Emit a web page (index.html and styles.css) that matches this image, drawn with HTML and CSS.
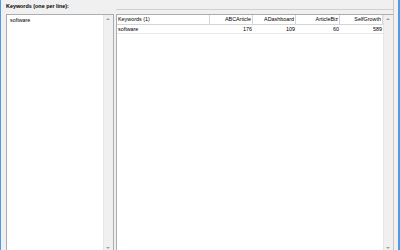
FILE: index.html
```html
<!DOCTYPE html>
<html lang="en">
<head>
  <meta charset="UTF-8">
  <title>Keywords</title>
  <link rel="stylesheet" href="styles.css">
</head>
<body>
<div class="window">
  <div class="edge"></div>
  <div class="main">
    <div class="left-col">
      <div class="label">Keywords (one per line):</div>
      <div class="input-box">
        <div class="input-text">software</div>
        <div class="vscroll">
          <span class="arrow up"></span>
          <span class="arrow down"></span>
        </div>
      </div>
    </div>
    <div class="right-col">
      <div class="top-strip"></div>
      <div class="grid-box">
        <div class="grid">
          <div class="row head">
            <div class="cell first">Keywords (1)</div>
            <div class="cell">ABCArticle</div>
            <div class="cell">ADashboard</div>
            <div class="cell wide">ArticleBiz</div>
            <div class="cell">SelfGrowth</div>
          </div>
          <div class="row">
            <div class="cell first">software</div>
            <div class="cell">176</div>
            <div class="cell">109</div>
            <div class="cell wide">60</div>
            <div class="cell">589</div>
          </div>
        </div>
        <div class="vscroll">
          <span class="arrow up"></span>
          <span class="arrow down"></span>
        </div>
      </div>
    </div>
  </div>
  <div class="edge right"></div>
</div>
</body>
</html>
```

FILE: styles.css
```css
body {
  margin: 0;
  font-family: 'Liberation Sans', Arial, sans-serif;
  font-size: 5.4px;
  color: #000;
  background: #f0f0f0;
}
.window {
  display: flex;
  height: 250px;
  overflow: hidden;
}
.edge {
  width: 2px;
  background: #4d9be6;
}
.edge.right {
  width: 4px;
  margin-left: 4px;
}
.main {
  flex: 1;
  display: flex;
  padding-left: 5px;
  gap: 2px;
}
.left-col {
  width: 108px;
  display: flex;
  flex-direction: column;
}
.label {
  height: 14px;
  line-height: 13px;
  font-weight: bold;
}
.input-box {
  flex: 1;
  display: flex;
  background: #fff;
  border: 1px solid #abadb3;
  border-bottom: none;
}
.input-text {
  flex: 1;
  padding: 2px 3px;
}
.vscroll {
  width: 9px;
  background: #f0f0f0;
  border-left: 1px solid #e6e6e6;
  position: relative;
}
.arrow {
  position: absolute;
  left: 2px;
  width: 0;
  height: 0;
  border-left: 2px solid transparent;
  border-right: 2px solid transparent;
}
.arrow.up {
  top: 3px;
  border-bottom: 2px solid #a0a0a0;
}
.arrow.down {
  bottom: 1px;
  border-top: 2px solid #a0a0a0;
}
.right-col {
  flex: 1;
  display: flex;
  flex-direction: column;
  border-right: 1px solid #c8c8c8;
}
.top-strip {
  height: 9px;
  border-bottom: 1px solid #d0d0d0;
  margin-bottom: 4px;
}
.grid-box {
  flex: 1;
  display: flex;
  background: #fff;
  border: 1px solid #abadb3;
  border-bottom: none;
  border-right: none;
}
.grid {
  flex: 1;
}
.row {
  display: flex;
  height: 8px;
  line-height: 8px;
  border-bottom: 1px solid #e8e8e8;
}
.row.head {
  height: 9px;
  line-height: 9px;
  border-bottom: 1px solid #d5d5d5;
}
.cell {
  width: 43px;
  text-align: right;
  padding-right: 1px;
  box-sizing: border-box;
  white-space: nowrap;
  overflow: hidden;
}
.head .cell {
  border-right: 1px solid #d5d5d5;
}
.cell.first {
  width: 93px;
  text-align: left;
  padding-left: 1px;
}
.cell.wide {
  width: 44px;
}
```
